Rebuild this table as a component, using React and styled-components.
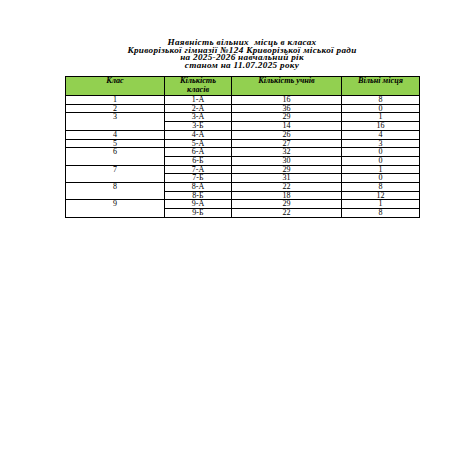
import styled, { createGlobalStyle } from "styled-components";

const GlobalStyle = createGlobalStyle`
  body {
    margin: 0;
    background: #ffffff;
    font-family: "Liberation Serif", "Times New Roman", serif;
    color: #000000;
  }
`;

const Page = styled.div`
  width: 453px;
  height: 453px;
  padding-top: 39px;
  box-sizing: border-box;
`;

const Sheet = styled.div`
  width: 354px;
  margin-left: 65px;
`;

const Title = styled.h1`
  margin: 0 0 7px;
  font-size: 9.2px;
  line-height: 7.5px;
  letter-spacing: 0.3px;
  font-weight: bold;
  font-style: italic;
  text-align: center;
  white-space: pre;
`;

const Table = styled.table`
  width: 354px;
  border-collapse: collapse;
  table-layout: fixed;
  font-size: 8px;
`;

const Head = styled.th`
  box-sizing: border-box;
  background: #92d050;
  border: 1px solid #000000;
  font-weight: bold;
  font-style: italic;
  font-size: 8.2px;
  line-height: 8.5px;
  height: 19px;
  padding: 0;
  vertical-align: top;
  text-align: center;
  width: ${(p) => p.$w}px;
`;

const Cell = styled.td`
  border: 1px solid #000000;
  border-top-color: ${(p) => (p.$soft ? "#6a6a6a" : "#000000")};
  padding: 0;
  height: 7.7px;
  line-height: 7.7px;
  text-align: center;
  vertical-align: top;
`;

const groups = [
  { klas: "1", rows: [["1-А", 16, 8]] },
  { klas: "2", rows: [["2-А", 36, 0]] },
  { klas: "3", rows: [["3-А", 29, 1], ["3-Б", 14, 16]] },
  { klas: "4", rows: [["4-А", 26, 4]] },
  { klas: "5", rows: [["5-А", 27, 3]] },
  { klas: "6", rows: [["6-А", 32, 0], ["6-Б", 30, 0]] },
  { klas: "7", rows: [["7-А", 29, 1], ["7-Б", 31, 0]] },
  { klas: "8", rows: [["8-А", 22, 8], ["8-Б", 18, 12]] },
  { klas: "9", rows: [["9-А", 29, 1], ["9-Б", 22, 8]] },
];

export default function App() {
  return (
    <Page>
      <GlobalStyle />
      <Sheet>
        <Title>
          {"Наявність вільних  місць в класах\nКриворізької гімназії №124 Криворізької міської ради\nна 2025-2026 навчальний рік\nстаном на 11.07.2025 року"}
        </Title>
        <Table>
          <thead>
            <tr>
              <Head $w={99}>Клас</Head>
              <Head $w={67}>
                Кількість
                <br />
                класів
              </Head>
              <Head $w={110}>Кількість учнів</Head>
              <Head $w={78}>Вільні місця</Head>
            </tr>
          </thead>
          <tbody>
            {groups.map((g) =>
              g.rows.map((r, i) => (
                <tr key={r[0]}>
                  {i === 0 && <Cell rowSpan={g.rows.length}>{g.klas}</Cell>}
                  <Cell $soft={i > 0}>{r[0]}</Cell>
                  <Cell $soft={i > 0}>{r[1]}</Cell>
                  <Cell $soft={i > 0}>{r[2]}</Cell>
                </tr>
              ))
            )}
          </tbody>
        </Table>
      </Sheet>
    </Page>
  );
}
